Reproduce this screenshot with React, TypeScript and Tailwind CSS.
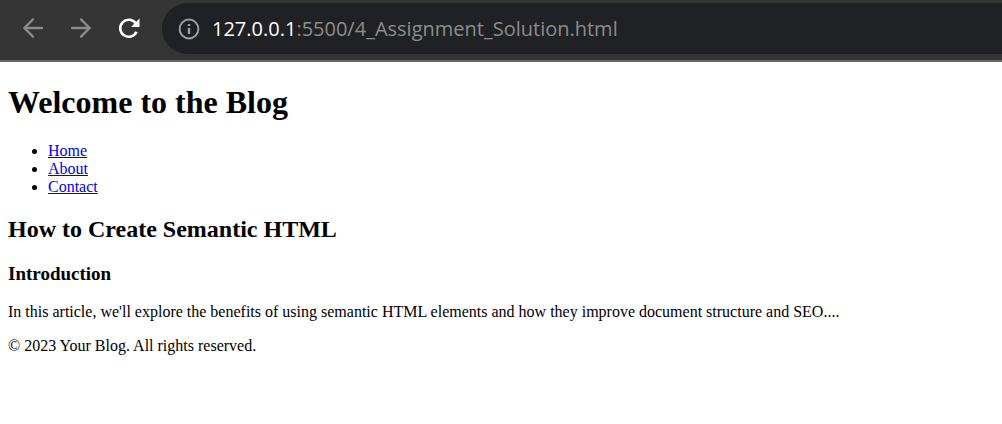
function BackIcon({ flipped = false }: { flipped?: boolean }) {
  return (
    <svg viewBox="0 0 22 22" className={flipped ? "size-[22px] rotate-180" : "size-[22px]"} fill="none" stroke="currentColor" strokeWidth="2.3" strokeLinecap="round" aria-hidden="true">
      <path d="M20 11H2.6M11 2.4L2.4 11L11 19.6" />
    </svg>
  );
}

function ReloadIcon() {
  return (
    <svg viewBox="0 0 22 22" className="size-[22px]" aria-hidden="true">
      <path d="M18.5 14.7A8.5 8.5 0 1 1 17.6 6.2" fill="none" stroke="currentColor" strokeWidth="2.6" />
      <path d="M21.5 1.5V10H13z" fill="currentColor" />
    </svg>
  );
}

function InfoIcon() {
  return (
    <svg viewBox="0 0 22 22" className="size-[22px]" fill="none" stroke="currentColor" strokeWidth="2" aria-hidden="true">
      <circle cx="11" cy="11" r="9.4" />
      <path d="M11 10v6M11 6v2" strokeWidth="2.4" />
    </svg>
  );
}

export default function App() {
  return (
    <div className="min-h-screen bg-white text-black">
      <header className="flex h-[62px] items-center border-b-2 border-[#666666] bg-[#353535] pb-[3px] text-[#8c8c8c]">
        <nav aria-label="Browser" className="flex shrink-0 gap-6 pb-0.5 pl-[21px]">
          <button type="button" aria-label="Back" className="grid size-6 place-items-center"><BackIcon /></button>
          <button type="button" aria-label="Forward" className="grid size-6 place-items-center"><BackIcon flipped /></button>
          <button type="button" aria-label="Reload" className="grid size-6 place-items-center text-white"><ReloadIcon /></button>
        </nav>
        <div className="ml-[21px] flex h-[51px] min-w-0 flex-1 items-center gap-3 rounded-l-full bg-[#202124] pl-4">
          <button type="button" aria-label="Site information" className="text-[#9aa0a6]"><InfoIcon /></button>
          <a href="#top" className="font-['Open_Sans',sans-serif] text-xl whitespace-nowrap">
            <span className="text-white">127.0.0.1</span>:5500/4_Assignment_Solution.html
          </a>
        </div>
      </header>
      <main id="top" className="px-2 pt-[22px] font-['Liberation_Serif',serif] text-base leading-[18px]">
        <h1 className="text-[32px] leading-9 font-bold">Welcome to the Blog</h1>
        <ul className="mt-[22px] list-disc pl-10">
          <li><a href="#home" className="text-[#0000ee] underline">Home</a></li>
          <li><a href="#about" className="text-[#0000ee] underline">About</a></li>
          <li><a href="#contact" className="text-[#0000ee] underline">Contact</a></li>
        </ul>
        <h2 className="mt-[19px] text-2xl leading-7 font-bold">How to Create Semantic HTML</h2>
        <h3 className="mt-5 text-[19px] leading-[22px] font-bold">Introduction</h3>
        <p className="mt-[18px]">In this article, we'll explore the benefits of using semantic HTML elements and how they improve document structure and SEO....</p>
        <p className="mt-4">© 2023 Your Blog. All rights reserved.</p>
      </main>
    </div>
  );
}
